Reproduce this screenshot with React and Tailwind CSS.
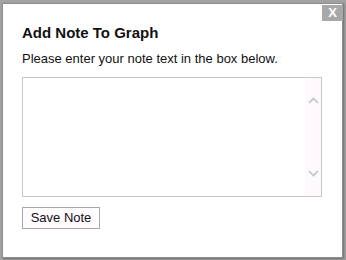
import React from 'react';

const font = { fontFamily: '"Liberation Sans", Arial, sans-serif' };

const Chevron = ({ up }) => (
  <svg width="11" height="7" viewBox="0 0 11 7" className="block">
    <path
      d={up ? 'M1 6 L5.5 1.5 L10 6' : 'M1 1 L5.5 5.5 L10 1'}
      fill="none"
      stroke="#c4c4c4"
      strokeWidth="1.6"
    />
  </svg>
);

export default function App() {
  return (
    <div className="w-[346px] h-[260px] bg-[#a2a2a2] pt-[3px] pl-[2px] overflow-hidden" style={font}>
      <div className="relative w-[341px] h-[255px] bg-white border border-[#8e8e8e] shadow-[1px_1px_2px_rgba(0,0,0,0.35)] pl-[19px] pt-[20px]">
        <button className="absolute top-[1px] right-[-1px] w-[21px] h-[16px] bg-[#a8a8a8] text-white font-bold text-[13px] leading-[16px] flex items-center justify-center">
          X
        </button>

        <h2 className="text-[15px] font-bold text-[#111] leading-[18px]">Add Note To Graph</h2>
        <p className="mt-[9px] text-[13px] text-[#111] leading-[16px]">
          Please enter your note text in the box below.
        </p>

        <div className="mt-[10px] w-[300px] h-[120px] border border-[#c8c8c8] flex">
          <textarea className="flex-1 resize-none outline-none p-1 text-[13px]" />
          <div className="w-[16px] bg-[#fdf9fd] flex flex-col items-center justify-between pt-[19px] pb-[19px]">
            <Chevron up />
            <Chevron />
          </div>
        </div>

        <button className="mt-[10px] w-[78px] h-[22px] border border-[#a9a9a9] bg-[#fffbff] text-[13px] text-[#111] leading-[20px]">
          Save Note
        </button>
      </div>
    </div>
  );
}
